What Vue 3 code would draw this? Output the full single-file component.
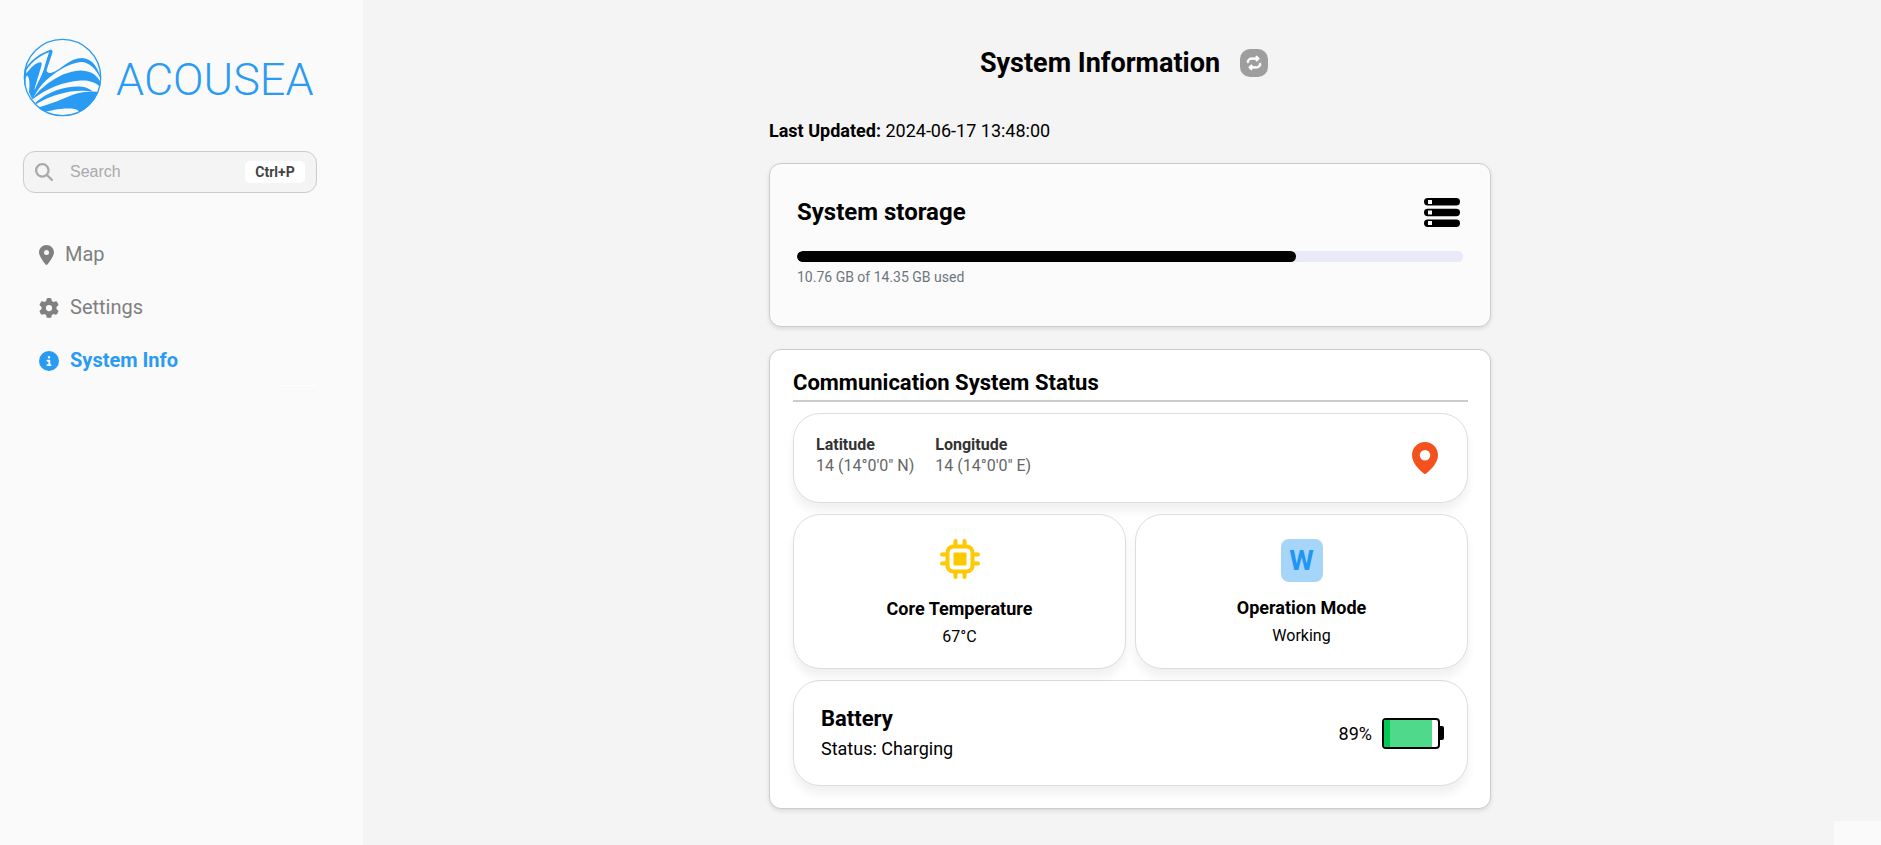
<script setup>
import { ref } from 'vue'

const search = ref('')
const storage = { used: 10.76, total: 14.35 }
const battery = { level: 89, status: 'Charging' }
const storagePercent = (storage.used / storage.total) * 100
</script>

<template>
  <div class="layout">
    <aside class="sidebar">
      <a class="brand" href="#">
        <svg class="brand-mark" viewBox="66 54 238 236" aria-hidden="true">
          <defs>
            <clipPath id="disc"><circle cx="185" cy="172" r="116" /></clipPath>
          </defs>
          <g clip-path="url(#disc)" fill="#2a9bf3">
            <path d="M68 158 C84 118 122 98 150 88 Q157 90 154 99 L137 150 Q138 160 152 158 C184 146 205 113 245 113 C277 115 294 145 304 186 C287 142 262 124 240 125 C196 130 154 164 136 180 C119 195 106 216 100 228 L94 238 L84 216 C87 194 86 170 78 166 Q72 170 74 200 L66 196 Z" />
            <path d="M96 234 C130 190 188 152 240 151 C276 152 294 170 304 196 L304 206 C286 184 262 180 238 181 C190 184 134 206 96 237 Z" />
            <path d="M102 249 C140 214 192 198 236 199 C256 200 268 207 276 214 C220 206 160 220 106 252 Z" />
            <path d="M108 264 C150 252 186 236 216 224 C250 212 280 212 304 217 L290 260 L230 292 C240 284 238 270 222 267 C186 262 150 272 130 276 Z" />
          </g>
          <path d="M76 150 C96 120 122 104 145 96 L130 132 C124 145 124 128 120 126 C104 126 90 142 76 160 Z" fill="#fafafa" />
          <path d="M123 129 L142 101 L128 150 C122 168 110 188 100 212 C106 182 120 148 123 129 Z" fill="#fafafa" />
          <circle cx="185" cy="172" r="115" fill="none" stroke="#2a9bf3" stroke-width="4" />
        </svg>
        <span class="brand-name">ACOUSEA</span>
      </a>

      <label class="search">
        <svg class="search-icon" viewBox="0 0 512 512" aria-hidden="true">
          <path fill="currentColor" d="M416 208c0 45.900-14.900 88.300-40 122.700L502.600 457.400c12.500 12.500 12.500 32.800 0 45.300s-32.800 12.500-45.300 0L330.700 376c-34.400 25.200-76.800 40-122.700 40C93.100 416 0 322.900 0 208S93.100 0 208 0S416 93.100 416 208zM208 352a144 144 0 1 0 0-288 144 144 0 1 0 0 288z" />
        </svg>
        <input v-model="search" type="text" placeholder="Search" aria-label="Search" />
        <kbd>Ctrl+P</kbd>
      </label>

      <nav class="menu">
        <a href="#map">
          <svg class="pin" viewBox="0 0 384 512" aria-hidden="true">
            <path fill="currentColor" d="M215.700 499.200C267 435 384 279.400 384 192C384 86 298 0 192 0S0 86 0 192c0 87.400 117 243 168.300 307.200c12.300 15.300 35.100 15.300 47.400 0zM192 128a64 64 0 1 1 0 128 64 64 0 1 1 0-128z" />
          </svg>
          <span>Map</span>
        </a>
        <a href="#settings">
          <svg viewBox="0 0 512 512" aria-hidden="true">
            <path fill="currentColor" d="M495.900 166.600c3.200 8.700 .5 18.400-6.400 24.600l-43.300 39.400c1.100 8.300 1.700 16.800 1.700 25.400s-.6 17.100-1.700 25.400l43.300 39.400c6.900 6.200 9.600 15.900 6.400 24.600c-4.400 11.900-9.700 23.300-15.800 34.300l-4.700 8.100c-6.600 11-14 21.400-22.100 31.200c-5.900 7.200-15.700 9.600-24.500 6.800l-55.700-17.700c-13.400 10.300-28.200 18.900-44 25.400l-12.500 57.100c-2 9.100-9 16.300-18.200 17.800c-13.800 2.300-28 3.500-42.500 3.500s-28.700-1.200-42.500-3.500c-9.200-1.500-16.200-8.700-18.200-17.800l-12.500-57.100c-15.800-6.500-30.600-15.100-44-25.400L83.100 425.900c-8.800 2.800-18.600 .3-24.500-6.800c-8.100-9.800-15.500-20.200-22.100-31.200l-4.700-8.100c-6.100-11-11.400-22.400-15.800-34.300c-3.200-8.700-.5-18.400 6.400-24.600l43.300-39.400C64.600 273.100 64 264.600 64 256s.6-17.100 1.700-25.400L22.400 191.200c-6.900-6.200-9.600-15.900-6.400-24.600c4.400-11.900 9.700-23.300 15.800-34.300l4.700-8.100c6.600-11 14-21.400 22.100-31.200c5.900-7.200 15.700-9.600 24.500-6.800l55.700 17.700c13.400-10.300 28.200-18.900 44-25.400l12.500-57.100c2-9.100 9-16.300 18.200-17.800C227.300 1.200 241.500 0 256 0s28.700 1.200 42.500 3.500c9.200 1.500 16.200 8.700 18.200 17.800l12.500 57.100c15.800 6.500 30.600 15.100 44 25.400l55.700-17.700c8.800-2.800 18.600-.3 24.500 6.800c8.100 9.800 15.500 20.200 22.100 31.200l4.700 8.100c6.100 11 11.400 22.400 15.800 34.300zM256 336a80 80 0 1 0 0-160 80 80 0 1 0 0 160z" />
          </svg>
          <span>Settings</span>
        </a>
        <a class="active" href="#system-info" aria-current="page">
          <svg viewBox="0 0 512 512" aria-hidden="true">
            <path fill="currentColor" d="M256 512A256 256 0 1 0 256 0a256 256 0 1 0 0 512zM216 336h24V272H216c-13.300 0-24-10.700-24-24s10.700-24 24-24h48c13.300 0 24 10.700 24 24v88h8c13.300 0 24 10.700 24 24s-10.700 24-24 24H216c-13.300 0-24-10.700-24-24s10.700-24 24-24zm40-208a32 32 0 1 1 0 64 32 32 0 1 1 0-64z" />
          </svg>
          <span>System Info</span>
        </a>
      </nav>
      <div class="menu-end"></div>
    </aside>

    <main class="content">
      <div class="column">
        <header class="page-head">
          <h1>System Information</h1>
          <button type="button" class="refresh" aria-label="Refresh">
            <svg viewBox="0 0 512 512" aria-hidden="true">
              <path fill="currentColor" stroke="currentColor" stroke-width="24" d="M0 224c0 17.700 14.300 32 32 32s32-14.300 32-32c0-53 43-96 96-96H320v32c0 12.900 7.800 24.600 19.800 29.600s25.700 2.200 34.900-6.900l64-64c12.500-12.500 12.500-32.800 0-45.300l-64-64c-9.200-9.200-22.900-11.900-34.900-6.900S320 19.100 320 32V64H160C71.600 64 0 135.600 0 224zm512 64c0-17.700-14.300-32-32-32s-32 14.300-32 32c0 53-43 96-96 96H192V352c0-12.900-7.800-24.600-19.800-29.600s-25.700-2.200-34.900 6.900l-64 64c-12.500 12.500-12.500 32.800 0 45.300l64 64c9.200 9.200 22.900 11.900 34.900 6.900s19.800-16.600 19.800-29.600V448H352c88.400 0 160-71.600 160-160z" />
            </svg>
          </button>
        </header>

        <p class="updated"><strong>Last Updated:</strong> 2024-06-17 13:48:00</p>

        <section class="panel storage">
          <div class="storage-head">
            <h2>System storage</h2>
            <svg class="drives" viewBox="0 0 36 29" aria-hidden="true">
              <g>
                <rect x="0" y="0" width="36" height="7.500" rx="3.700" />
                <rect x="0" y="10.750" width="36" height="7.500" rx="3.700" />
                <rect x="0" y="21.500" width="36" height="7.500" rx="3.700" />
              </g>
              <g fill="#fff">
                <rect x="4" y="2" width="4" height="4" />
                <rect x="4" y="12.500" width="4" height="4" />
                <rect x="4" y="23" width="4" height="4" />
              </g>
            </svg>
          </div>
          <div class="bar" role="progressbar" aria-label="Storage used" :aria-valuenow="Math.round(storagePercent)">
            <div class="bar-fill" :style="{ width: storagePercent + '%' }"></div>
          </div>
          <p class="usage">{{ storage.used }} GB of {{ storage.total }} GB used</p>
        </section>

        <section class="panel status">
          <h2>Communication System Status</h2>

          <div class="card location">
            <dl>
              <div>
                <dt>Latitude</dt>
                <dd>14 (14°0'0" N)</dd>
              </div>
              <div>
                <dt>Longitude</dt>
                <dd>14 (14°0'0" E)</dd>
              </div>
            </dl>
            <svg class="marker" viewBox="0 0 26 32" aria-hidden="true">
              <path fill="#f4511e" fill-rule="evenodd" d="M13 0C20.500 0 26 6 26 13C26 20.500 20 26.500 14.500 31.300Q13 32.500 11.500 31.300C6 26.500 0 20.500 0 13C0 6 5.500 0 13 0ZM13 8a5.300 5.300 0 1 0 0 10.600a5.300 5.300 0 1 0 0-10.600Z" />
            </svg>
          </div>

          <div class="pair">
            <div class="card tile">
              <svg class="chip" viewBox="0 0 40 40" aria-hidden="true">
                <g fill="none" stroke="#fdc900" stroke-width="4" stroke-linecap="round">
                  <path d="M15.500 2V6M24.500 2V6M15.500 34V38M24.500 34V38M2 15.500H6M2 24.500H6M34 15.500H38M34 24.500H38" />
                  <rect x="7.500" y="7.500" width="25" height="25" rx="6" />
                </g>
                <rect x="13.500" y="13.500" width="13" height="13" rx="1" fill="#fdc900" />
              </svg>
              <h3>Core Temperature</h3>
              <p>67°C</p>
            </div>
            <div class="card tile">
              <span class="mode" aria-hidden="true">W</span>
              <h3>Operation Mode</h3>
              <p>Working</p>
            </div>
          </div>

          <div class="card battery">
            <div>
              <h2>Battery</h2>
              <p>Status: {{ battery.status }}</p>
            </div>
            <div class="charge">
              <span>{{ battery.level }}%</span>
              <div class="cell">
                <div class="cell-fill" :style="{ width: battery.level + '%' }"></div>
              </div>
              <div class="cell-cap"></div>
            </div>
          </div>
        </section>
      </div>
      <div class="corner"></div>
    </main>
  </div>
</template>

<style>
body {
  margin: 0;
  background: #f4f4f4;
}
</style>

<style scoped>
* {
  box-sizing: border-box;
}

h1, h2, h3, p, dl, dd {
  margin: 0;
}

.layout {
  display: flex;
  min-height: 100vh;
  background: #f4f4f4;
  color: #000;
  font-family: Roboto, "Liberation Sans", sans-serif;
  font-size: 16px;
}

.sidebar {
  flex: none;
  width: 363px;
  padding: 38px 46px 0 23px;
  background: #fafafa;
}

.brand {
  display: flex;
  align-items: center;
  gap: 14px;
  color: #2a9bf3;
  text-decoration: none;
}

.brand-mark {
  flex: none;
  width: 79px;
  height: 79px;
}

.brand-name {
  padding-top: 5px;
  font-size: 45px;
  font-weight: 300;
  line-height: 74px;
}

.search {
  display: flex;
  align-items: center;
  height: 42px;
  margin-top: 34px;
  padding: 0 11px;
  border: 1px solid #ccc;
  border-radius: 12px;
  background: #f4f4f4;
}

.search-icon {
  flex: none;
  width: 18px;
  height: 18px;
  color: #a9a9a9;
}

.search input {
  flex: 1;
  min-width: 0;
  margin: 0 8px 0 17px;
  padding: 0;
  border: 0;
  outline: 0;
  background: transparent;
  color: #444;
  font: 16px "Liberation Sans", sans-serif;
}

.search input::placeholder {
  color: #aaa;
  opacity: 1;
}

.search kbd {
  width: 60px;
  border-radius: 5px;
  background: #fff;
  color: #444;
  font: bold 14px/22px Roboto, sans-serif;
  text-align: center;
}

.menu {
  display: flex;
  flex-direction: column;
  gap: 28px;
  margin-top: 49px;
  padding-left: 16px;
}

.menu a {
  display: flex;
  align-items: center;
  gap: 11px;
  color: #808080;
  font-size: 20px;
  line-height: 25px;
  text-decoration: none;
}

.menu svg {
  width: 20px;
  height: 20px;
}

.menu svg.pin {
  width: 15px;
}

.menu a.active {
  color: #2a9bf3;
  font-weight: bold;
}

.menu-end {
  width: 36px;
  height: 1px;
  margin: 12px 0 0 auto;
  background: #fff;
}

.content {
  position: relative;
  flex: 1;
  padding: 0 0 24px 16px;
}

.column {
  width: 100%;
  max-width: 722px;
  margin: 0 auto;
}

.page-head {
  display: flex;
  justify-content: center;
  align-items: center;
  gap: 20px;
  padding: 47px 12px 0 0;
}

.page-head h1 {
  font-size: 27px;
  line-height: 32px;
}

.refresh {
  display: grid;
  place-items: center;
  width: 28px;
  height: 28px;
  padding: 0;
  border: 0;
  border-radius: 10px;
  background: #9e9e9e;
  color: #fff;
}

.refresh svg {
  width: 14px;
  height: 14px;
  overflow: visible;
}

.updated {
  margin-top: 40px;
  font-size: 18px;
  line-height: 24px;
}

.panel {
  border: 1px solid #ccc;
  border-radius: 12px;
  box-shadow: 0 2px 4px rgba(0, 0, 0, 0.1);
}

.storage {
  margin-top: 20px;
  padding: 32px 27px 39px;
  background: #fbfbfb;
}

.storage-head {
  display: flex;
  justify-content: space-between;
  align-items: center;
  height: 32px;
  padding-right: 3px;
}

h2 {
  font-size: 22px;
  line-height: 28px;
}

.storage-head h2 {
  font-size: 24px;
}

.drives {
  width: 36px;
  height: 29px;
}

.bar {
  height: 11px;
  margin-top: 23px;
  border-radius: 6px;
  background: #e8eaf9;
  overflow: hidden;
}

.bar-fill {
  height: 100%;
  border-radius: 6px;
  background: #000;
}

.usage {
  margin-top: 5px;
  color: #6c757d;
  font-size: 14px;
  line-height: 20px;
}

.status {
  margin-top: 22px;
  padding: 19px 22px 22px 23px;
  background: #fff;
}

.status > h2 {
  padding-bottom: 3px;
  border-bottom: 2px solid #ccc;
}

.card {
  border: 1px solid #ddd;
  border-radius: 27px;
  background: #fff;
  box-shadow: 0 8px 10px rgba(0, 0, 0, 0.06);
}

.location {
  display: flex;
  justify-content: space-between;
  align-items: center;
  height: 90px;
  margin-top: 11px;
  padding: 0 29px 0 22px;
}

.location dl {
  display: flex;
  gap: 21px;
  margin-top: -6px;
  line-height: 21px;
}

.location dt {
  color: #333;
  font-weight: bold;
}

.location dd {
  color: #666;
}

.marker {
  width: 26px;
  height: 32px;
}

.pair {
  display: grid;
  grid-template-columns: 1fr 1fr;
  gap: 9px;
  margin: 11px 0;
}

.tile {
  display: flex;
  flex-direction: column;
  align-items: center;
  height: 155px;
  padding-top: 24px;
}

.chip {
  width: 40px;
  height: 40px;
  margin-bottom: 4px;
}

.mode {
  width: 42px;
  border-radius: 8px;
  background: #a6d5fa;
  color: #2196f3;
  font-size: 28px;
  font-weight: bold;
  line-height: 43px;
  text-align: center;
}

.tile h3 {
  margin-top: 14px;
  font-size: 18px;
  line-height: 24px;
}

.tile p {
  margin-top: 5px;
  line-height: 22px;
}

.battery {
  display: flex;
  justify-content: space-between;
  align-items: center;
  height: 106px;
  padding: 0 23px 0 27px;
  font-size: 18px;
}

.battery p {
  margin-top: 4px;
  line-height: 24px;
}

.charge {
  display: flex;
  align-items: center;
}

.cell {
  width: 58px;
  height: 31px;
  margin-left: 10px;
  border: 2px solid #000;
  border-radius: 4px;
  overflow: hidden;
}

.cell-fill {
  height: 100%;
  border-left: 6px solid #00c853;
  background: #4fd98a;
}

.cell-cap {
  width: 4px;
  height: 14px;
  border-radius: 0 2px 2px 0;
  background: #000;
}

.corner {
  position: absolute;
  right: 0;
  bottom: 0;
  width: 47px;
  height: 24px;
  background: #fafafa;
}
</style>
